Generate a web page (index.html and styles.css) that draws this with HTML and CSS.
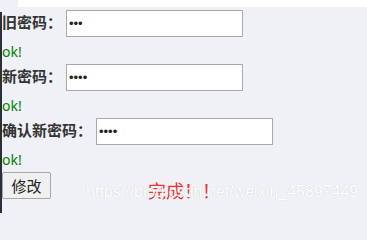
FILE: index.html
```html
<!DOCTYPE html>
<html lang="zh">
<head>
<meta charset="utf-8">
<title>修改密码</title>
<link rel="stylesheet" href="styles.css">
</head>
<body>
<div class="topband"></div>
<div class="page">
  <div class="edge"></div>
  <div class="content">
    <div class="row">
      <label class="lbl">旧密码：</label>
      <input class="pwd" type="password" value="123">
    </div>
    <div class="ok">ok!</div>
    <div class="row">
      <label class="lbl">新密码：</label>
      <input class="pwd" type="password" value="1234">
    </div>
    <div class="ok">ok!</div>
    <div class="row">
      <label class="lbl">确认新密码：</label>
      <input class="pwd" type="password" value="1234">
    </div>
    <div class="ok">ok!</div>
    <div class="actions">
      <button class="btn" type="button">修改</button>
      <span class="done">完成！！</span>
    </div>
  </div>
</div>
<div class="watermark">https://blog.csdn.net/weixin_45897449</div>
</body>
</html>
```

FILE: styles.css
```css
html, body {
  margin: 0;
  padding: 0;
  height: 213px;
  overflow: hidden;
}
body {
  background: #f0f1f6;
  position: relative;
  font-family: "Noto Sans CJK SC", "Noto Sans", sans-serif;
}
.topband {
  height: 7px;
  margin-left: 18px;
  background: #ffffff;
}
.page {
  display: flex;
  height: 206px;
}
.edge {
  width: 2px;
  margin-top: 5px;
  background: #2a303b;
  flex: none;
}
.content {
  padding-top: 3px;
  display: flex;
  flex-direction: column;
}
.row {
  display: flex;
  align-items: center;
  gap: 4px;
  height: 27px;
}
.lbl {
  font-size: 15px;
  font-weight: 700;
  color: #333333;
  padding-bottom: 4px;
  white-space: nowrap;
}
.pwd {
  box-sizing: border-box;
  width: 177px;
  height: 27px;
  margin: 0;
  border: 1px solid #a9a9a9;
  background: #ffffff;
  padding: 0 2px;
  font-size: 13px;
  color: #222;
  outline: none;
}
.ok {
  height: 27px;
  line-height: 30px;
  font-family: "Noto Sans", sans-serif;
  font-size: 14px;
  color: #008000;
}
.actions {
  display: flex;
  align-items: center;
  height: 27px;
}
.btn {
  box-sizing: border-box;
  width: 49px;
  height: 27px;
  margin: 0;
  padding: 0;
  border: 1px solid #a6a6a6;
  border-radius: 2px;
  background: #f0f0f0;
  font-family: "Noto Sans CJK SC", sans-serif;
  font-size: 15px;
  color: #222;
}
.done {
  margin-left: 97px;
  margin-top: 9px;
  font-size: 18px;
  color: #f23030;
  white-space: nowrap;
}
.watermark {
  position: absolute;
  left: 86px;
  top: 183px;
  font-family: "Liberation Sans", Arial, sans-serif;
  font-size: 16px;
  line-height: 18px;
  color: #ffffff;
  text-shadow: 0 0 1px rgba(0, 0, 0, 0.2);
  white-space: nowrap;
}
```
